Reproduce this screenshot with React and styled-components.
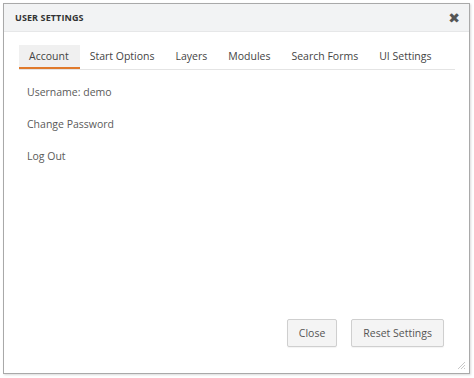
import React from "react";
import styled, { createGlobalStyle } from "styled-components";

const Global = createGlobalStyle`
  html, body { margin: 0; padding: 0; background: #fff; }
  body { font-family: "Open Sans", "Liberation Sans", sans-serif; }
  * { box-sizing: border-box; }
`;

const Page = styled.div`
  width: 474px;
  height: 378px;
  padding: 3px 4px 4px 3px;
`;

const Dialog = styled.div`
  width: 467px;
  height: 371px;
  border: 1px solid #a9a9a9;
  box-shadow: 1px 1px 2px rgba(0,0,0,0.15);
  background: #fff;
  display: flex;
  flex-direction: column;
  position: relative;
`;

const TitleBar = styled.div`
  height: 28px;
  background: #f2f3f4;
  border-bottom: 1px solid #e6e7e8;
  display: flex;
  align-items: center;
  justify-content: space-between;
  padding: 0 9px 0 11px;
`;

const Title = styled.div`
  font-size: 9px;
  font-weight: 700;
  color: #333;
  letter-spacing: 0.1px;
`;

const CloseX = styled.div`
  font-size: 14px;
  font-weight: 700;
  color: #555;
  line-height: 1;
  font-family: "DejaVu Sans", sans-serif;
`;

const Body = styled.div`
  flex: 1;
  display: flex;
  flex-direction: column;
  padding: 13px 14px 26px 15px;
`;

const Tabs = styled.div`
  display: flex;
  border-bottom: 1px solid #e4e4e4;
`;

const Tab = styled.div`
  flex-shrink: 0;
  white-space: nowrap;
  height: 24px;
  display: flex;
  align-items: center;
  padding: 0 11px 0 10px;
  font-size: 10.5px;
  color: #444;
  background: ${p => (p.$active ? "#f0f0f0" : "transparent")};
  border-bottom: 2px solid ${p => (p.$active ? "#e07a2c" : "transparent")};
`;

const List = styled.div`
  display: flex;
  flex-direction: column;
  gap: 17px;
  padding: 15px 0 0 8px;
  flex: 1;
`;

const Item = styled.div`
  font-size: 10.5px;
  color: #5a5a5a;
  line-height: 15px;
`;

const Footer = styled.div`
  display: flex;
  justify-content: flex-end;
  gap: 14px;
  padding-right: 11px;
`;

const Button = styled.button`
  height: 28px;
  padding: 0 ${p => p.$pad}px;
  border: 1px solid #cfcfcf;
  background: #f4f4f4;
  border-radius: 2px;
  font-family: "Open Sans", "Liberation Sans", sans-serif;
  font-size: 10.5px;
  color: #555;
  box-shadow: 0 1px 1px rgba(0,0,0,0.05);
`;

const Grip = styled.svg`
  position: absolute;
  right: 3px;
  bottom: 3px;
`;

const tabs = [
  ["Account", 1],
  ["Start Options", 0],
  ["Layers", 0],
  ["Modules", 0],
  ["Search Forms", 0],
  ["UI Settings", 0],
];

export default function App() {
  return (
    <>
      <Global />
      <Page>
        <Dialog>
          <TitleBar>
            <Title>USER SETTINGS</Title>
            <CloseX>✖</CloseX>
          </TitleBar>
          <Body>
            <Tabs>
              {tabs.map(([t, a]) => (
                <Tab key={t} $active={!!a}>{t}</Tab>
              ))}
            </Tabs>
            <List>
              <Item>Username: demo</Item>
              <Item>Change Password</Item>
              <Item>Log Out</Item>
            </List>
            <Footer>
              <Button $pad={11}>Close</Button>
              <Button $pad={11}>Reset Settings</Button>
            </Footer>
          </Body>
          <Grip width="10" height="10" viewBox="0 0 10 10">
            <path d="M9 2 L2 9 M9 5 L5 9 M9 8 L8 9" stroke="#c8c8c8" strokeWidth="1" />
          </Grip>
        </Dialog>
      </Page>
    </>
  );
}
